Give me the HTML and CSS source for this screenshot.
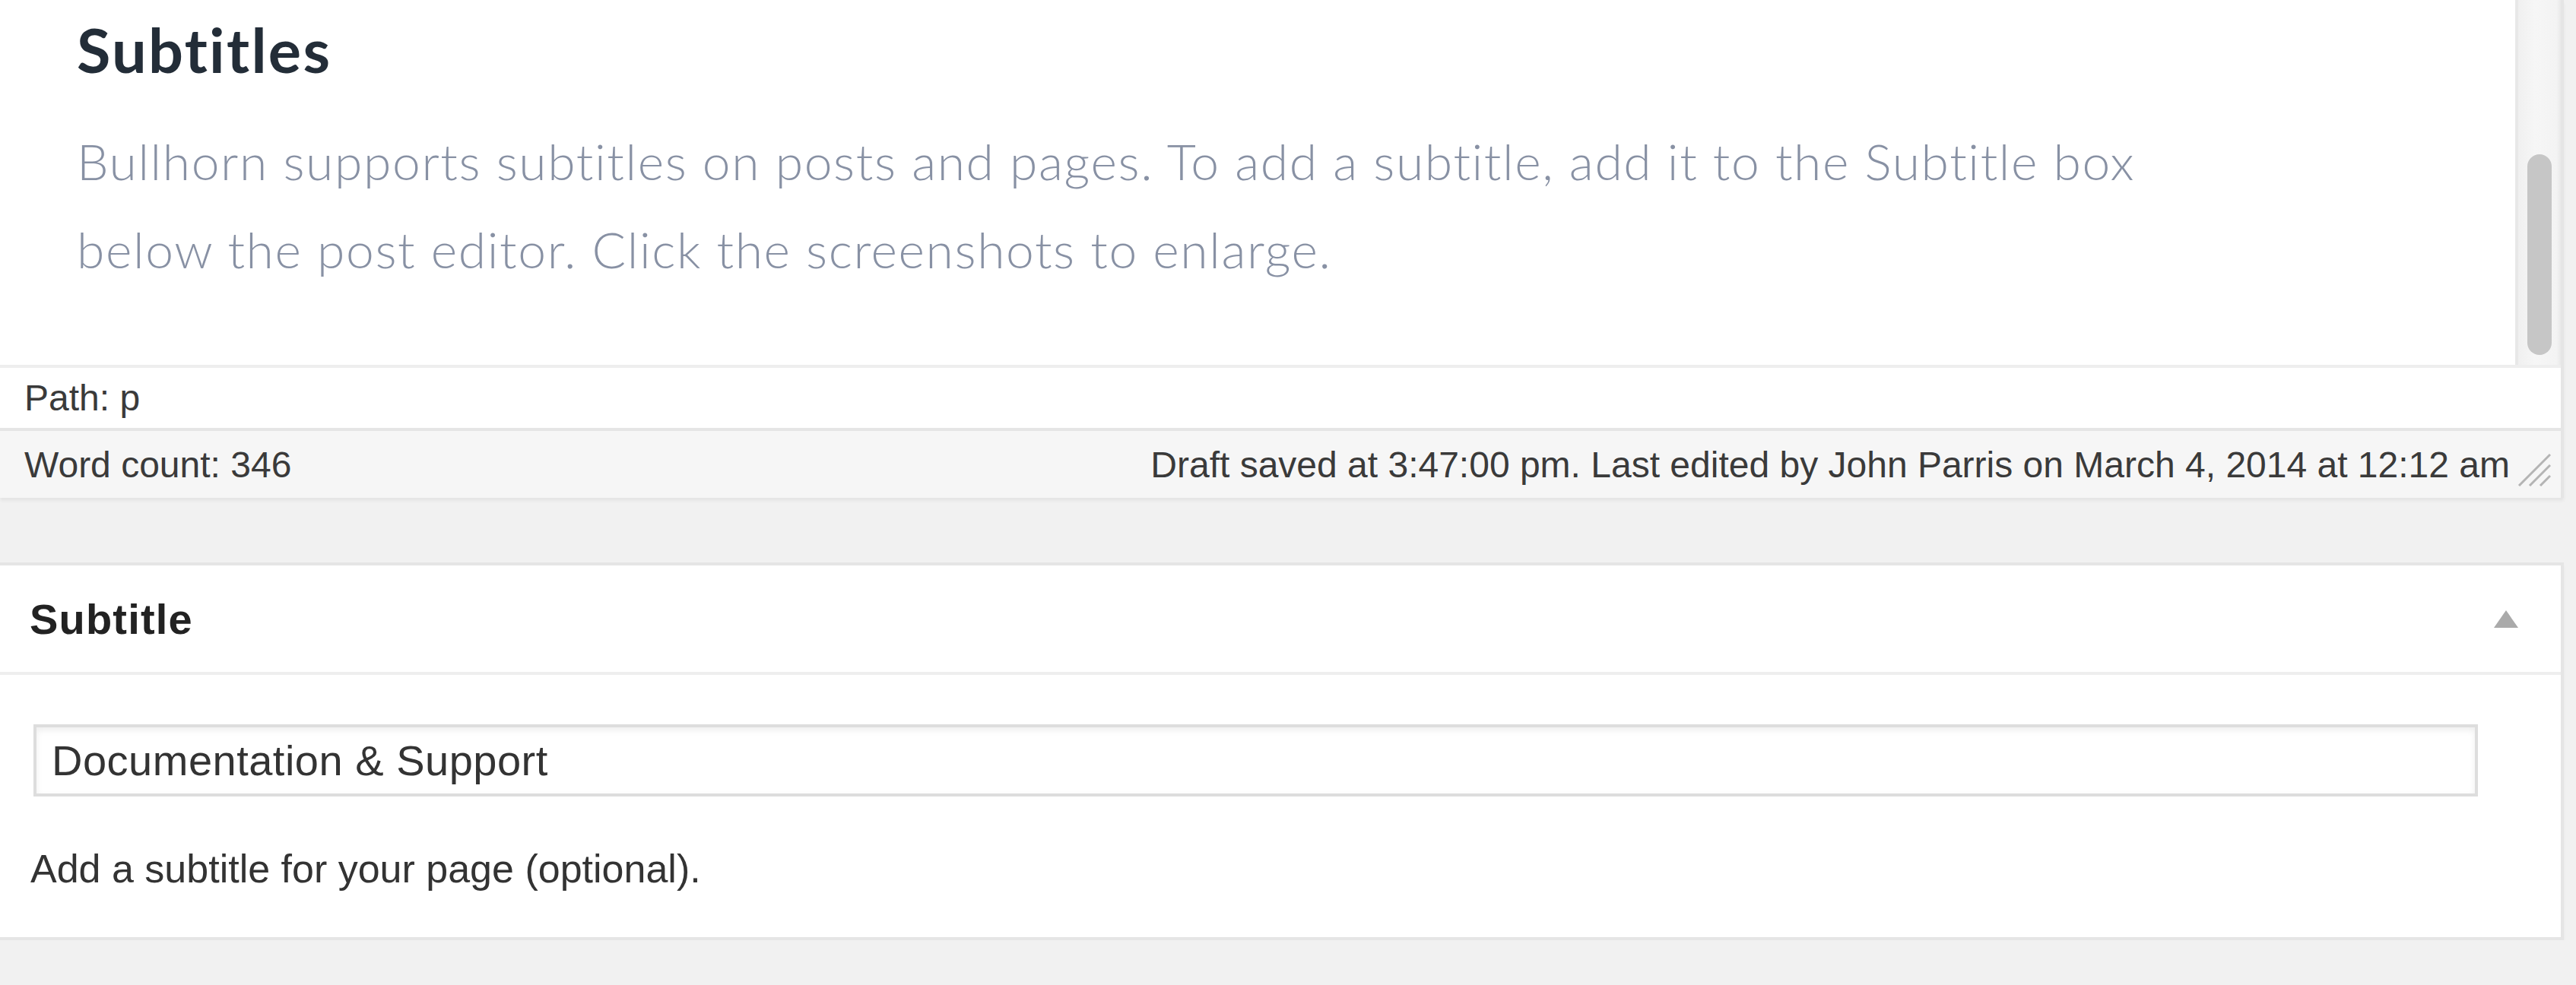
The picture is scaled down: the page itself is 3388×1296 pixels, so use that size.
FILE: index.html
```html
<!DOCTYPE html>
<html lang="en">
<head>
<meta charset="utf-8">
<title>Subtitles</title>
<link rel="stylesheet" href="styles.css">
</head>
<body>
  <div class="editor">
    <div class="content-area">
      <div class="doc">
        <h2 class="doc-title">Subtitles</h2>
        <p class="doc-text">Bullhorn supports subtitles on posts and pages. To add a subtitle, add it to the Subtitle box below the post editor. Click the screenshots to enlarge.</p>
      </div>
      <div class="scrolltrack"><div class="thumb"></div></div>
    </div>
    <div class="path-row">Path: p</div>
    <div class="status-row">
      <span class="word-count">Word count: 346</span>
      <span class="draft">Draft saved at 3:47:00 pm. Last edited by John Parris on March 4, 2014 at 12:12 am</span>
      <svg class="resize" width="44" height="44" viewBox="0 0 44 44">
        <line x1="2" y1="43" x2="43" y2="2" stroke="#b4b4b4" stroke-width="3"/>
        <line x1="16" y1="43" x2="43" y2="16" stroke="#b4b4b4" stroke-width="3"/>
        <line x1="30" y1="43" x2="43" y2="30" stroke="#b4b4b4" stroke-width="3"/>
      </svg>
    </div>
  </div>

  <div class="metabox">
    <div class="mb-head">
      <h3 class="mb-title">Subtitle</h3>
      <span class="toggle"></span>
    </div>
    <div class="mb-body">
      <input class="subtitle-input" type="text" value="Documentation &amp; Support">
      <p class="mb-desc">Add a subtitle for your page (optional).</p>
    </div>
  </div>
</body>
</html>
```

FILE: styles.css
```css
html, body {
  margin: 0;
  padding: 0;
}
body {
  background: #f1f1f1;
  font-family: "Liberation Sans", Arial, sans-serif;
  color: #333;
}

.editor {
  margin-right: 16px;
  background: #fff;
  border-right: 4px solid #e5e5e5;
  box-shadow: 0 4px 4px rgba(0, 0, 0, 0.05);
}

.content-area {
  display: flex;
  height: 480px;
  border-bottom: 4px solid #eeeeee;
}
.doc {
  flex: 1;
  border-right: 4px solid #e8e8e8;
  padding-left: 101px;
  overflow: hidden;
}
.doc-title {
  margin: 17px 0 0;
  font-family: Lato, "Open Sans", sans-serif;
  font-weight: 700;
  font-size: 81px;
  line-height: 96px;
  letter-spacing: 2.3px;
  font-variant-ligatures: none;
  color: #232d38;
}
.doc-text {
  margin: 41px 0 0;
  max-width: 2770px;
  font-family: Lato, "Open Sans", sans-serif;
  font-weight: 300;
  font-size: 66px;
  line-height: 116px;
  letter-spacing: 1.6px;
  font-variant-ligatures: none;
  color: #8891a4;
}
.scrolltrack {
  width: 56px;
  background: linear-gradient(to right, #f0f0f0, #f6f6f6 40%, #f3f3f3 90%, #e9e9e9);
  padding-top: 203px;
  box-sizing: border-box;
}
.thumb {
  width: 32px;
  height: 264px;
  margin-left: 12px;
  border-radius: 16px;
  background: #c6c6c6;
}

.path-row {
  display: flex;
  align-items: center;
  height: 79px;
  padding-left: 32px;
  font-size: 48px;
  color: #3a3a3a;
}
.status-row {
  display: flex;
  align-items: center;
  height: 88px;
  border-top: 4px solid #e5e5e5;
  background: #f6f6f6;
  padding-left: 32px;
  font-size: 48px;
  color: #3a3a3a;
}
.draft {
  margin-left: auto;
}
.resize {
  display: block;
  margin-left: 10px;
  margin-right: 13px;
  margin-top: 14px;
}

.metabox {
  margin: 85px 16px 0 0;
  background: #fff;
  border-top: 4px solid #e5e5e5;
  border-right: 4px solid #e5e5e5;
  border-bottom: 4px solid #e5e5e5;
  box-shadow: 0 4px 4px rgba(0, 0, 0, 0.04);
}
.mb-head {
  display: flex;
  align-items: center;
  height: 140px;
  padding-left: 39px;
  border-bottom: 4px solid #eeeeee;
}
.mb-title {
  margin: 0;
  font-size: 56px;
  font-weight: 700;
  letter-spacing: 1.2px;
  color: #222;
}
.toggle {
  margin-left: auto;
  margin-right: 56px;
  width: 0;
  height: 0;
  border-left: 16px solid transparent;
  border-right: 16px solid transparent;
  border-bottom: 23px solid #aaaaaa;
}
.mb-body {
  padding: 65px 0 60px 40px;
}
.subtitle-input {
  display: block;
  box-sizing: border-box;
  width: 3215px;
  height: 95px;
  margin: 0 0 0 4px;
  padding: 0 20px;
  border: 4px solid #dddddd;
  box-shadow: inset 0 4px 8px rgba(0, 0, 0, 0.07);
  font-family: "Liberation Sans", Arial, sans-serif;
  font-size: 56px;
  letter-spacing: 0.5px;
  color: #333;
  background: #fff;
  outline: none;
}
.mb-desc {
  margin: 65px 0 0;
  font-size: 52px;
  line-height: 60px;
  color: #333;
}
```
